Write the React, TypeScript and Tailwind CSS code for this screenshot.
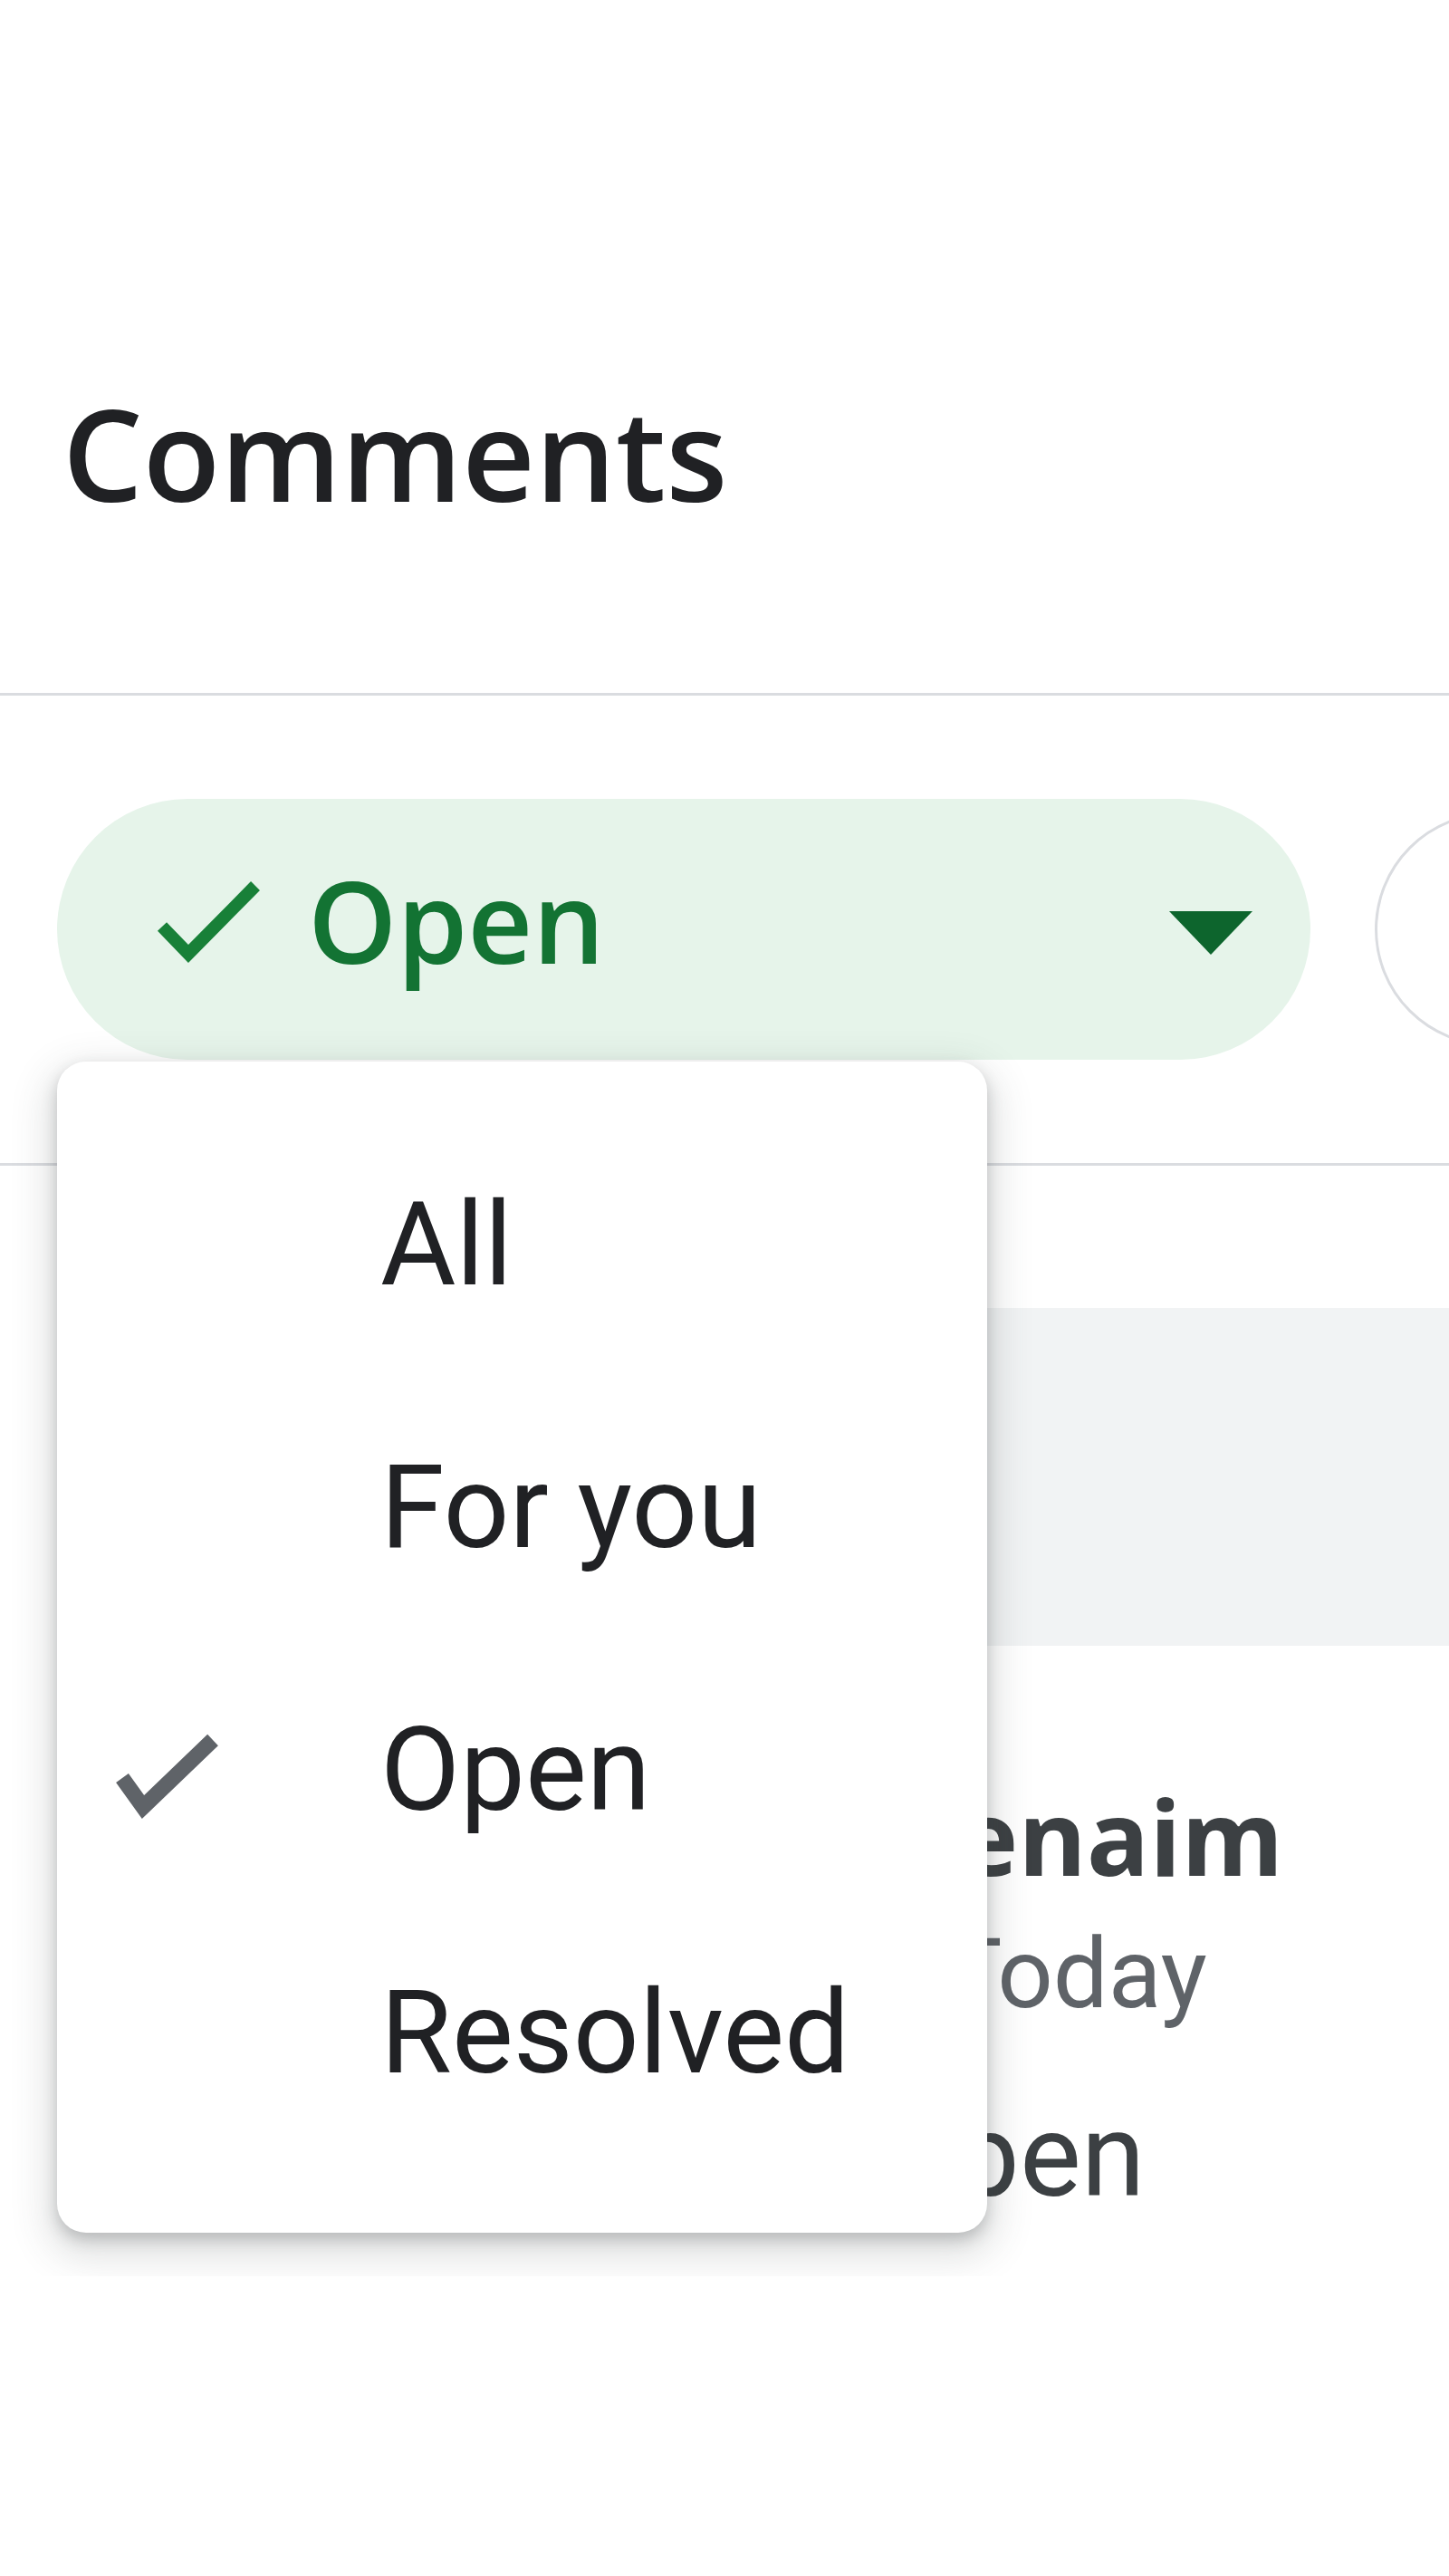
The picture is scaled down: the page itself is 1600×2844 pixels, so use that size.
import React from "react";

const menuItems = [
  { label: "All", checked: false },
  { label: "For you", checked: false },
  { label: "Open", checked: true },
  { label: "Resolved", checked: false },
];

function PillCheck() {
  return (
    <svg width="116" height="91" viewBox="0 0 116 91" className="mb-[17px] shrink-0">
      <polyline
        points="7,51 36,81 110,6"
        fill="none"
        stroke="#188038"
        strokeWidth="14"
        strokeLinejoin="miter"
      />
    </svg>
  );
}

function MenuCheck() {
  return (
    <svg width="115" height="95" viewBox="0 0 115 95" className="mt-[12px]">
      <polyline
        points="8,50 31,82 108,8"
        fill="none"
        stroke="#5f6368"
        strokeWidth="17"
        strokeLinejoin="miter"
      />
    </svg>
  );
}

function FilterMenu() {
  return (
    <div className="absolute left-[63px] top-[1172px] w-[1027px] h-[1293px] bg-white rounded-[32px] shadow-[0_16px_40px_12px_rgba(60,64,67,0.15),0_8px_16px_rgba(60,64,67,0.25)] pt-[57px]">
      {menuItems.map((item) => (
        <div key={item.label} className="flex items-center h-[290px]">
          <div className="w-[357px] pl-[64px] flex items-center">
            {item.checked && <MenuCheck />}
          </div>
          <span className="font-['Roboto',sans-serif] font-normal text-[128px] leading-[290px] text-[#202124]">
            {item.label}
          </span>
        </div>
      ))}
    </div>
  );
}

export default function App() {
  return (
    <div className="relative w-[1600px] h-[2513px] overflow-hidden bg-white">
      {/* header */}
      <div className="h-[768px] border-b-[3px] border-[#dadce0] pt-[430px] pl-[69px]">
        <h1 className="font-['Open_Sans',sans-serif] font-semibold text-[140px] leading-none text-[#202124]">
          Comments
        </h1>
      </div>

      {/* filter row */}
      <div className="h-[519px] border-b-[3px] border-[#dadce0] pt-[114px] flex items-start gap-[71px] pl-[63px]">
        <div className="w-[1384px] h-[288px] shrink-0 rounded-full bg-[#e6f4ea] flex items-center pl-[109px] pr-[64px]">
          <PillCheck />
          <span className="ml-[52px] pb-[22px] font-['Open_Sans',sans-serif] font-semibold text-[125px] leading-none text-[#137333]">
            Open
          </span>
          <svg width="92" height="48" viewBox="0 0 92 48" className="ml-auto mt-[8px]">
            <polygon points="0,0 92,0 46,48" fill="#0d652d" />
          </svg>
        </div>
        <div className="w-[258px] h-[258px] mt-[15px] shrink-0 rounded-full border-[3px] border-[#dadce0]" />
      </div>

      {/* comment card behind the menu */}
      <div className="mt-[157px] ml-[66px] w-[1600px] border-l-2 border-[#dadce0]">
        <div className="h-[373px] bg-[#f1f3f4]" />
        <div className="pl-[911px]">
          <p className="mt-[152px] font-['Open_Sans',sans-serif] font-bold text-[115px] leading-none text-[#3c4043]">
            Benaim
          </p>
          <p className="mt-[41px] ml-[63px] font-['Roboto',sans-serif] text-[108px] leading-none text-[#5f6368]">
            Today
          </p>
          <p className="mt-[83px] -ml-[13px] font-['Roboto',sans-serif] text-[128px] leading-none text-[#3c4043]">
            Open
          </p>
        </div>
      </div>

      <FilterMenu />
    </div>
  );
}
